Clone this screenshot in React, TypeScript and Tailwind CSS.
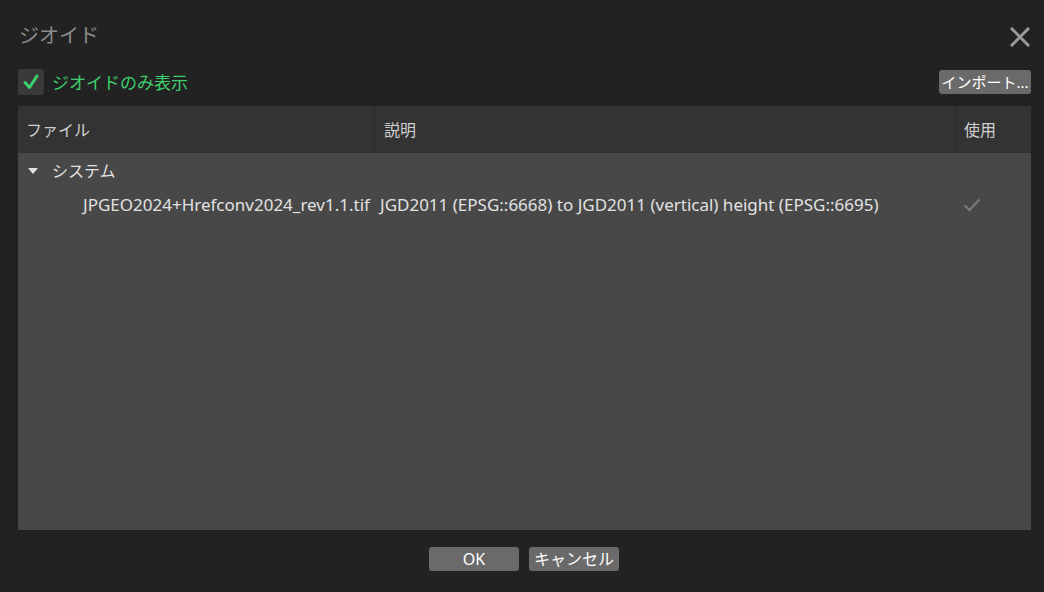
import React from "react";

const jp = '"Noto Sans", "Noto Sans CJK JP", sans-serif';

export default function App() {
  return (
    <div
      className="w-[1044px] h-[592px] bg-[#222222] flex flex-col overflow-hidden"
      style={{ fontFamily: jp }}
    >
      <div className="flex items-start justify-between pl-[19px] pr-[14px] pt-[26px] h-[46px]">
        <div className="text-[20px] leading-none text-[#8a8a8a]">ジオイド</div>
        <svg width="20" height="20" viewBox="0 0 20 20" className="mt-[1px]">
          <path d="M2 2 L18 18 M18 2 L2 18" stroke="#9a9a9a" strokeWidth="3" strokeLinecap="square" />
        </svg>
      </div>
      <div className="flex items-center justify-between pl-[18px] pr-[13px] h-[26px] mt-[23px]">
        <div className="flex items-center gap-[8px]">
          <div className="w-[26px] h-[26px] rounded-[3px] bg-[#3a3a3a] flex items-center justify-center">
            <svg width="18" height="18" viewBox="0 0 18 18">
              <path d="M3 9.5 L7.5 14.5 L15 3" fill="none" stroke="#3ed06e" strokeWidth="3" strokeLinecap="round" strokeLinejoin="round" />
            </svg>
          </div>
          <span className="text-[17px] text-[#3fcf6c] leading-none">ジオイドのみ表示</span>
        </div>
        <button className="w-[92px] h-[24px] rounded-[3px] bg-[#6a6a6a] text-white text-[15px] leading-none flex items-center justify-center">
          インポート...
        </button>
      </div>
      <div className="mx-[18px] mt-[11px] w-[1013px] h-[424px] shrink-0 bg-[#484848] flex flex-col">
        <div className="h-[47px] shrink-0 bg-[#333333] flex text-[16px] text-[#d0d0d0]">
          <div className="w-[357px] border-r border-[#2b2b2b] flex items-center pl-[8px]">ファイル</div>
          <div className="w-[581px] border-r border-[#2b2b2b] flex items-center pl-[9px]">説明</div>
          <div className="flex-1 flex items-center pl-[8px]">使用</div>
        </div>
        <div className="flex flex-col pt-[1px] text-[17px] text-[#e2e2e2]">
          <div className="h-[34px] flex items-center pl-[10px]">
            <svg width="10" height="8" viewBox="0 0 10 8" className="mr-[14px]">
              <path d="M0 1 L10 1 L5 7 Z" fill="#e0e0e0" />
            </svg>
            <span className="text-[16px]">システム</span>
          </div>
          <div className="h-[34px] flex items-center">
            <div className="w-[357px] pl-[65px] whitespace-nowrap">JPGEO2024+Hrefconv2024_rev1.1.tif</div>
            <div className="w-[581px] pl-[5px] whitespace-nowrap">JGD2011 (EPSG::6668) to JGD2011 (vertical) height (EPSG::6695)</div>
            <div className="flex-1 pl-[7px] flex items-center">
              <svg width="18" height="14" viewBox="0 0 18 14">
                <path d="M1.5 7.5 L6.5 12 L16.5 1.5" fill="none" stroke="#7a7a7a" strokeWidth="2.2" />
              </svg>
            </div>
          </div>
        </div>
      </div>
      <div className="flex justify-center gap-[10px] mt-[17px] pl-[4px]">
        <button className="w-[90px] h-[24px] rounded-[3px] bg-[#6a6a6a] text-white text-[16px] leading-none flex items-center justify-center">
          OK
        </button>
        <button className="w-[90px] h-[24px] rounded-[3px] bg-[#6a6a6a] text-white text-[16px] leading-none flex items-center justify-center">
          キャンセル
        </button>
      </div>
    </div>
  );
}
